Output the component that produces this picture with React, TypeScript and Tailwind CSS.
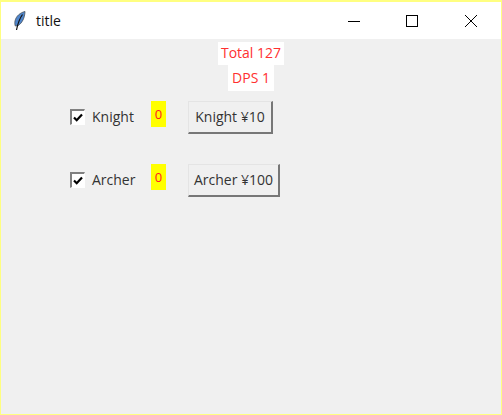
const font = "font-['Open_Sans','Noto_Sans',sans-serif]";

function Feather() {
  return (
    <svg width="12" height="20" viewBox="0 0 12 20">
      <path d="M11 0.500C6.500 1.500 2 5 1 10c-.4 2 -.2 3.500 .3 5l3 -.5C8 12 10.800 7 11 .5z" fill="#4f86cc" stroke="#4a5058" strokeWidth="0.800" />
      <path d="M8.500 3.500C6 7 4 11 2.500 19" fill="none" stroke="#111" strokeWidth="1.200" />
    </svg>
  );
}

function Check() {
  return (
    <span className="mb-[2px] flex h-[16px] w-[15px] items-center justify-center border-t-2 border-l-2 border-t-[#808080] border-l-[#808080] border-r border-b border-r-white border-b-white bg-white">
      <svg width="10" height="9" viewBox="0 0 10 9">
        <path d="M1 4.500L3.700 7.200L9 1.500" fill="none" stroke="#000" strokeWidth="2.200" />
      </svg>
    </span>
  );
}

function UnitRow({ name, cost, btnW, mb }: { name: string; cost: string; btnW: string; mb: string }) {
  return (
    <div className={`flex items-center pl-[69px] ${mb}`}>
      <Check />
      <span className="mb-[2px] ml-[7px] w-[59px] text-[14px] leading-5 text-[#333]">{name}</span>
      <span className="flex h-[26px] w-[15px] items-center justify-center self-start bg-[#ffff00] pt-[2px] text-[13px] text-[#ff2020]">0</span>
      <button className={`ml-[22px] ${btnW} h-[33px] border border-t-[#e4e4e4] border-l-[#e4e4e4] border-r-2 border-b-2 border-r-[#777] border-b-[#777] bg-[#f0f0f0] pb-[2px] text-[14px] text-[#333]`}>
        {cost}
      </button>
    </div>
  );
}

export default function App() {
  return (
    <div className={`${font} flex h-[415px] w-[502px] flex-col border border-[#ffff80] border-t-2 bg-[#f0f0f0]`}>
      <div className="flex h-[37px] items-center bg-white pl-[13px]">
        <Feather />
        <span className="ml-[10px] text-[14px] text-[#111]">title</span>
        <div className="ml-auto flex items-center">
          <svg width="12" height="12" viewBox="0 0 12 12" className="mr-[46px]">
            <path d="M0 6.500H12" stroke="#000" />
          </svg>
          <svg width="12" height="12" viewBox="0 0 12 12" className="mr-[47px]">
            <rect x="0.500" y="0.500" width="11" height="11" fill="none" stroke="#000" />
          </svg>
          <svg width="12" height="12" viewBox="0 0 12 12" className="mr-[24px]">
            <path d="M0 0L12 12M12 0L0 12" stroke="#000" />
          </svg>
        </div>
      </div>
      <div className="flex flex-col items-center pt-[3px]">
        <span className="flex h-[23px] w-[66px] items-center justify-center bg-white pb-[2px] text-[14px] text-[#ff3030]">Total 127</span>
        <span className="flex h-[26px] w-[46px] items-center justify-center bg-white pb-[2px] text-[14px] text-[#ff3030]">DPS 1</span>
      </div>
      <div className="mt-[10px]">
        <UnitRow name="Knight" cost="Knight ¥10" btnW="w-[85px]" mb="mb-[30px]" />
        <UnitRow name="Archer" cost="Archer ¥100" btnW="w-[92px]" mb="" />
      </div>
    </div>
  );
}
